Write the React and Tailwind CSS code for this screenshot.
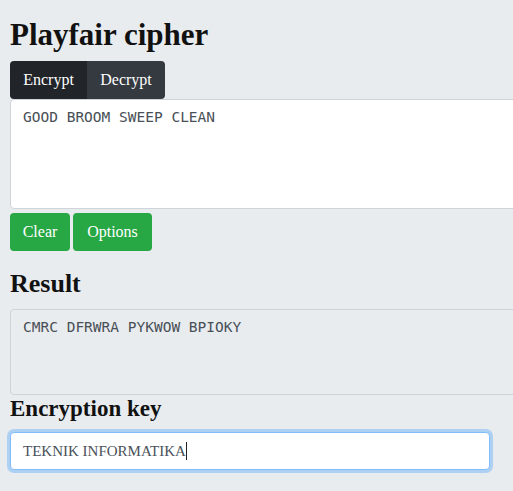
export default function App() {
  const serif = { fontFamily: '"Liberation Serif", "Times New Roman", serif' };
  const mono = { fontFamily: '"DejaVu Sans Mono", "Liberation Mono", monospace' };
  return (
    <div className="w-full min-h-screen overflow-hidden bg-[#e9ecef] text-[#212529]" style={serif}>
      <div className="pl-[10px] pt-[16px]">
        <h1 className="text-[31px] leading-[37px] font-bold text-[#111] whitespace-nowrap">Playfair cipher</h1>
        <div className="mt-[8px] flex">
          <div className="flex rounded-[4px] overflow-hidden">
            <button className="h-[38px] w-[77px] bg-[#212529] text-white text-[16px] leading-[24px]">Encrypt</button>
            <button className="h-[38px] w-[78px] bg-[#343a40] text-white text-[16px] leading-[24px]">Decrypt</button>
          </div>
        </div>
        <div
          className="h-[110px] w-[600px] bg-white border border-[#ced4da] rounded-[4px] px-[12px] pt-[7px] text-[14.5px] leading-[21.75px] text-[#495057] whitespace-nowrap"
          style={mono}
        >
          GOOD BROOM SWEEP CLEAN
        </div>
        <div className="mt-[4px] flex gap-[3px]">
          <button className="h-[38px] w-[60px] rounded-[4px] bg-[#28a745] text-white text-[16px] leading-[24px]">Clear</button>
          <button className="h-[38px] w-[79px] rounded-[4px] bg-[#28a745] text-white text-[16px] leading-[24px]">Options</button>
        </div>
        <h2 className="mt-[17px] text-[26px] leading-[31px] font-bold text-[#111]">Result</h2>
        <div
          className="mt-[10px] h-[86px] w-[600px] bg-[#e9ecef] border border-[#ced4da] rounded-[4px] px-[12px] pt-[7px] text-[14.5px] leading-[21.75px] text-[#495057] whitespace-nowrap"
          style={mono}
        >
          CMRC DFRWRA PYKWOW BPIOKY
        </div>
        <h3 className="text-[23px] leading-[28px] font-bold text-[#111]">Encryption key</h3>
        <div className="mt-[9px] h-[38px] w-[480px] bg-white border border-[#80bdff] rounded-[4px] shadow-[0_0_0_3px_rgba(0,123,255,0.25)] px-[12px] pt-[6px] text-[15px] leading-[24px] text-[#495057] whitespace-nowrap flex items-start">
          <span>TEKNIK INFORMATIKA</span>
          <span className="inline-block w-[1px] h-[18px] bg-[#222] mt-[3px]"></span>
        </div>
      </div>
    </div>
  );
}
